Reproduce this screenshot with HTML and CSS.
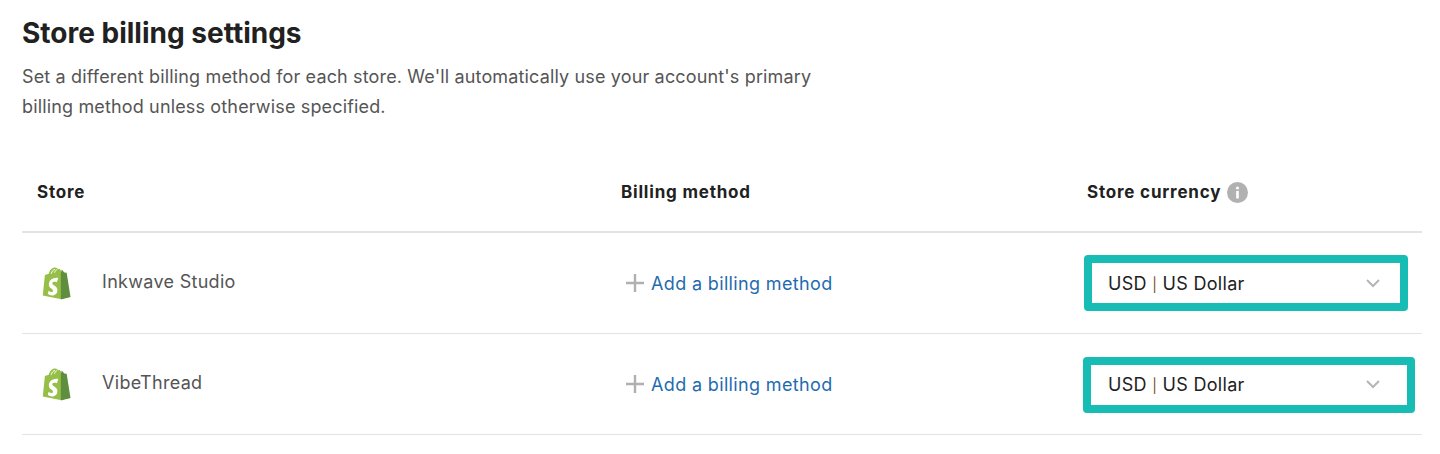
FILE: index.html
```html
<!DOCTYPE html>
<html lang="en">
<head>
<meta charset="utf-8">
<title>Store billing settings</title>
<link rel="stylesheet" href="styles.css">
</head>
<body>
<main class="page">
  <h1 class="title">Store billing settings</h1>
  <p class="intro">Set a different billing method for each store. We'll automatically use your account's primary billing method unless otherwise specified.</p>
  <section class="table">
    <div class="row head">
      <div class="cell">Store</div>
      <div class="cell">Billing method</div>
      <div class="cell currency-head">Store currency
        <svg class="info" viewBox="0 0 21 21" width="21" height="21"><circle cx="10.5" cy="10.5" r="10.5" fill="#b1b1b1"/><circle cx="10.5" cy="6" r="1.5" fill="#fff"/><rect x="9.2" y="9" width="2.6" height="7.5" fill="#fff"/></svg>
      </div>
    </div>
    <div class="row">
      <div class="cell store">
        <svg class="bag" viewBox="0 0 30 34" width="29" height="33"><path d="M3 8.2 7 7C8 3 10.500 .5 13.500 .5c1.500 0 2.500.8 3 1.800L18.500 2l2 3.200 2.500.3L28.500 31 19 33 .8 29.500z" fill="#95bf47"/><path d="M20.500 2.600 23 5.500l2.500.3L29.500 31 19.500 33.500V6.500z" fill="#5e8e3e"/><path d="M9.500 7c.8-3 2.500-4.500 4-4.500M13 5.800c.4-1.800 1.500-3 2.500-3" fill="none" stroke="#fff" stroke-width="1"/><path d="M16.500 12.300l-1.100 3.400s-1.200-.6-2.600-.5c-2.100.1-2.100 1.400-2.100 1.800.1 1.800 4.900 2.200 5.200 6.500.2 3.300-1.800 5.600-4.600 5.800-3.400.2-5.200-1.800-5.200-1.800l.7-3s1.800 1.400 3.300 1.300c1-.1 1.300-.8 1.300-1.400-.2-2.400-4.100-2.200-4.300-6.200-.2-3.300 2-6.700 6.800-7 1.800-.1 2.600.1 2.600.1z" fill="#fff"/></svg>
        <span class="store-name">Inkwave Studio</span>
      </div>
      <div class="cell"><a class="add" href="#"><svg class="plus" viewBox="0 0 18 18" width="18" height="18"><path d="M9 0v18M0 9h18" stroke="#b0b0b0" stroke-width="2.400"/></svg>Add a billing method</a></div>
      <div class="cell select-cell">
        <div class="select narrow"><span>USD <i class="sep">|</i> US Dollar</span><svg class="chev" viewBox="0 0 14 9" width="14" height="9"><path d="M1 1l6 6 6-6" fill="none" stroke="#b5b5b5" stroke-width="2"/></svg></div>
      </div>
    </div>
    <div class="row">
      <div class="cell store">
        <svg class="bag" viewBox="0 0 30 34" width="29" height="33"><path d="M3 8.2 7 7C8 3 10.500 .5 13.500 .5c1.500 0 2.500.8 3 1.800L18.500 2l2 3.200 2.500.3L28.500 31 19 33 .8 29.500z" fill="#95bf47"/><path d="M20.500 2.600 23 5.500l2.500.3L29.500 31 19.500 33.500V6.500z" fill="#5e8e3e"/><path d="M9.500 7c.8-3 2.500-4.500 4-4.500M13 5.800c.4-1.800 1.500-3 2.500-3" fill="none" stroke="#fff" stroke-width="1"/><path d="M16.500 12.300l-1.100 3.400s-1.200-.6-2.600-.5c-2.100.1-2.100 1.400-2.100 1.800.1 1.800 4.900 2.200 5.200 6.500.2 3.300-1.800 5.600-4.600 5.800-3.400.2-5.200-1.800-5.200-1.800l.7-3s1.800 1.400 3.300 1.300c1-.1 1.300-.8 1.300-1.400-.2-2.400-4.100-2.200-4.300-6.200-.2-3.300 2-6.700 6.800-7 1.800-.1 2.600.1 2.600.1z" fill="#fff"/></svg>
        <span class="store-name">VibeThread</span>
      </div>
      <div class="cell"><a class="add" href="#"><svg class="plus" viewBox="0 0 18 18" width="18" height="18"><path d="M9 0v18M0 9h18" stroke="#b0b0b0" stroke-width="2.400"/></svg>Add a billing method</a></div>
      <div class="cell select-cell">
        <div class="select wide"><span>USD <i class="sep">|</i> US Dollar</span><svg class="chev" viewBox="0 0 14 9" width="14" height="9"><path d="M1 1l6 6 6-6" fill="none" stroke="#b5b5b5" stroke-width="2"/></svg></div>
      </div>
    </div>
  </section>
</main>
</body>
</html>
```
FILE: styles.css
```css
* { box-sizing: border-box; }
html, body { margin: 0; background: #fff; }
body { font-family: Inter, Lato, sans-serif; color: #212121; height: 454px; overflow: hidden; }
.page { padding: 0 18px 0 22px; }
.title { margin: 0; padding-top: 16px; font-size: 28px; line-height: 34px; font-weight: 700; color: #212121; }
.intro { margin: 12px 0 0; width: 800px; font-size: 18px; line-height: 30px; letter-spacing: 0.15px; color: #555; }
.table { margin-top: 31px; }
.row { display: grid; grid-template-columns: 584px 466px 350px; height: 101px; border-bottom: 1px solid #e3e3e3; align-items: center; }
.row.head { height: 80px; border-bottom: 2px solid #e3e3e3; font-size: 17px; letter-spacing: 0.8px; font-weight: 700; }
.cell { padding-left: 15px; }
.store { display: flex; align-items: center; gap: 31px; padding-left: 20px; }
.bag { flex: none; }
.store-name { font-size: 18px; letter-spacing: 0.3px; color: #555; margin-top: -3px; }
.add { display: flex; align-items: center; gap: 7px; padding-left: 5px; color: #1f6bb0; text-decoration: none; font-size: 18px; letter-spacing: 0.35px; }
.currency-head { display: flex; align-items: center; gap: 6px; }
.select-cell { padding-left: 12px; }
.select { display: flex; justify-content: space-between; align-items: center; height: 56px; border: 8px solid #17bdb5; border-radius: 4px; padding: 0 20px 0 16px; font-size: 18px; letter-spacing: 0.3px; color: #212121; }
.narrow { width: 324px; }
.wide { width: 332px; margin: 2px 0 0 -1px; padding: 0 27px 2px 17px; }
.sep { font-style: normal; font-size: 14px; color: #7a4a1e; }
```
